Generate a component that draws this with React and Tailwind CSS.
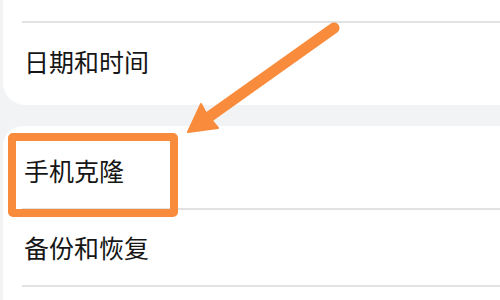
import React from "react";

const font = { fontFamily: '"Noto Sans CJK SC", "Noto Sans", sans-serif' };

function Row({ label, h }) {
  return (
    <div className={`flex items-center pl-[21px] ${h}`}>
      <span className="text-[25px] leading-none font-normal text-[#161616]" style={font}>
        {label}
      </span>
    </div>
  );
}

function Sep() {
  return <div className="ml-[19px] h-[2px] bg-[#e2e2e2]" />;
}

export default function App() {
  return (
    <div className="relative w-[500px] h-[300px] overflow-hidden bg-[#f2f3f5] pl-[3px]">
      <div className="w-[530px] bg-white rounded-b-[22px] pb-[5px]">
        <div className="h-[21px]" />
        <Sep />
        <Row label="日期和时间" h="h-[77px]" />
      </div>
      <div className="h-[21px]" />
      <div className="w-[530px] bg-white rounded-t-[20px] pt-[6px] h-[200px]">
        <Row label="手机克隆" h="h-[76px]" />
        <Sep />
        <Row label="备份和恢复" h="h-[75px]" />
        <Sep />
      </div>

      <div className="absolute left-[8px] top-[133px] w-[170px] h-[84px] border-[8px] border-[#f88c3c] rounded-[5px]" />

      <svg
        className="absolute left-0 top-0"
        width="500"
        height="300"
        viewBox="0 0 500 300"
      >
        <line
          x1="334"
          y1="28"
          x2="206"
          y2="119"
          stroke="#f88c3c"
          strokeWidth="11"
          strokeLinecap="round"
        />
        <polygon
          points="188,132 201,104 207,115 218,128"
          fill="#f88c3c"
          strokeLinejoin="round"
          stroke="#f88c3c"
          strokeWidth="2"
        />
      </svg>
    </div>
  );
}
